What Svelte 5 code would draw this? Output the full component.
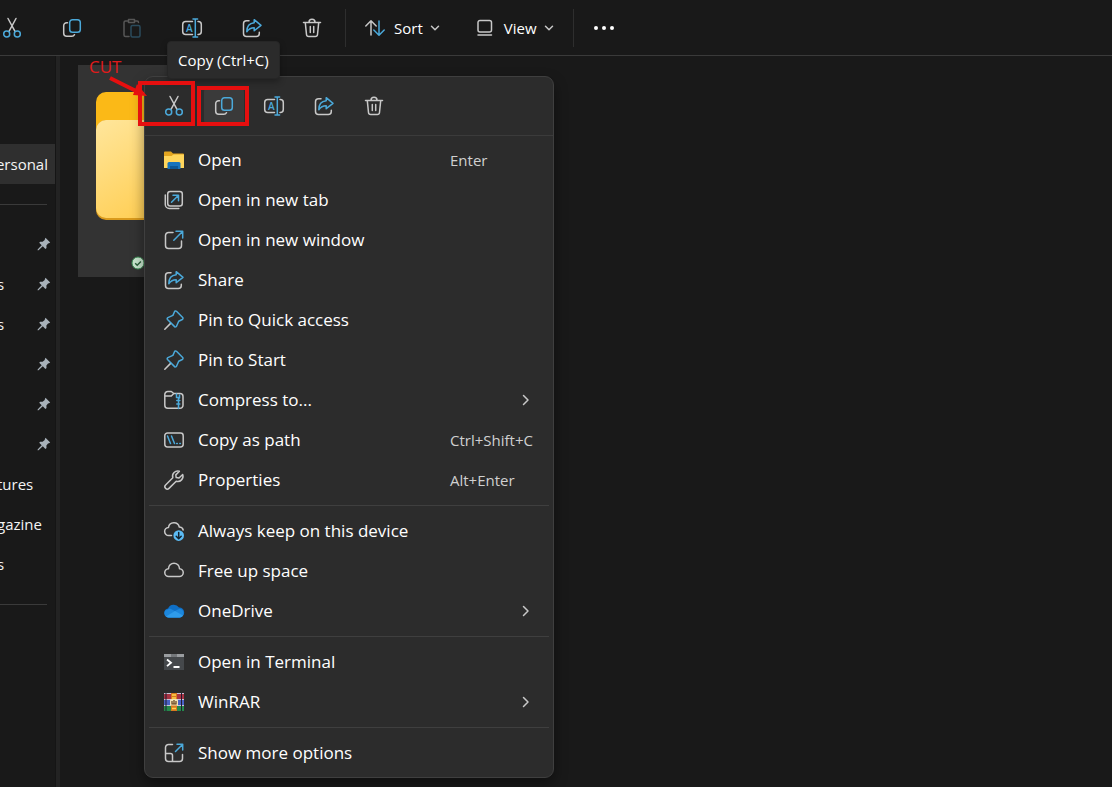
<script lang="ts">
  interface Stroke {
    d: string;
    tone?: 'accent' | 'solid';
  }

  interface MenuItem {
    label: string;
    icon: string;
    shortcut?: string;
    submenu?: boolean;
  }

  // Line icons on a 20×20 grid. Strokes without a tone use the light grey.
  const icons: Record<string, Stroke[]> = {
    cut: [
      { d: 'M6 .5 13 13.4M14 .5 7 13.4' },
      { d: 'M7.7 16a3 3 0 1 1-6 0 3 3 0 0 1 6 0ZM18.3 16a3 3 0 1 1-6 0 3 3 0 0 1 6 0Z', tone: 'accent' },
    ],
    copy: [
      { d: 'M5.5 4.7h-.8a3 3 0 0 0-3 3v7.6a3 3 0 0 0 3 3h5a3 3 0 0 0 2.8-1.6' },
      { d: 'M10.5 1.7h5a2.8 2.8 0 0 1 2.8 2.8v7a2.8 2.8 0 0 1-2.8 2.8h-5a2.8 2.8 0 0 1-2.8-2.8v-7a2.8 2.8 0 0 1 2.8-2.8Z', tone: 'accent' },
    ],
    paste: [
      { d: 'M6 3H3.5A1.5 1.5 0 0 0 2 4.5v12.5A1.5 1.5 0 0 0 3.5 18.5H7M13 3h2a1.5 1.5 0 0 1 1.5 1.5M6.5 1.5h6v3h-6Z' },
      { d: 'M10.5 7.5h6a1.5 1.5 0 0 1 1.5 1.5v8.5a1.5 1.5 0 0 1-1.5 1.5h-6A1.5 1.5 0 0 1 9 17.5V9a1.5 1.5 0 0 1 1.5-1.5Z', tone: 'accent' },
    ],
    rename: [
      { d: 'M10.5 3.5H3.7a3 3 0 0 0-3 3v7a3 3 0 0 0 3 3h6.8M16 3.5h.3a3 3 0 0 1 3 3v7a3 3 0 0 1-3 3H16' },
      { d: 'M13.3 1v18M11 1h4.6M11 19h4.6', tone: 'accent' },
    ],
    share: [
      { d: 'M7 2.7H4.5a3 3 0 0 0-3 3v9.8a3 3 0 0 0 3 3h9.8a3 3 0 0 0 3-3v-1.2' },
      { d: 'M12.2 1.7 19 7.3l-6.8 5.4V9.8c-3.2 0-5.4 1-7.4 3.9 0-5.5 2.9-8.6 7.4-9Z', tone: 'accent' },
    ],
    trash: [
      { d: 'M1.5 4.5h17M7 4.3a3 3 0 0 1 6 0M3.3 4.7l1.2 11.8a2.2 2.2 0 0 0 2.2 2h6.6a2.2 2.2 0 0 0 2.2-2l1.2-11.8M8.3 8.5v6M11.7 8.5v6' },
    ],
    sort: [
      { d: 'M6 17V3M.8 8 6 2.800l5.2 5.2' },
      { d: 'M14 3v14M8.8 12 14 17.200l5.2-5.2', tone: 'accent' },
    ],
    view: [{ d: 'M5 2.500h9.500a2 2 0 0 1 2 2v7.500a2 2 0 0 1-2 2H5a2 2 0 0 1-2-2V4.500a2 2 0 0 1 2-2ZM3 17h13.500' }],
    tab: [
      { d: 'M6.2 1.5h9.6a2.5 2.5 0 0 1 2.5 2.5v9.6a2.5 2.5 0 0 1-2.5 2.5H6.2a2.5 2.5 0 0 1-2.5-2.5V4a2.5 2.5 0 0 1 2.5-2.5ZM1.300 5v9.500a4 4 0 0 0 4 4h9.500' },
      { d: 'M7.5 12.3l6.8-6.8M9 5.3h5.5v5.5', tone: 'accent' },
    ],
    window: [
      { d: 'M9 2.5H4.5a3 3 0 0 0-3 3v10a3 3 0 0 0 3 3h10a3 3 0 0 0 3-3V11' },
      { d: 'M9.8 10.2 18.5 1.5M12 1.3h6.7V8', tone: 'accent' },
    ],
    pin: [
      { d: 'M.8 19.2l5.8-5.8' },
      { d: 'M12.5 1.3l6.2 6.2a1.3 1.3 0 0 1-.4 2l-3.6 1.7-2.2 5a1.2 1.2 0 0 1-1.9.4L3.5 9.5a1.2 1.2 0 0 1 .4-1.9l5-2.2L10.5 1.7a1.3 1.3 0 0 1 2-.4Z', tone: 'accent' },
    ],
    compress: [
      { d: 'M.8 6h6.5l2.5-2.5H16a3 3 0 0 1 3 3v8.8a3 3 0 0 1-3 3H3.8a3 3 0 0 1-3-3V4.5a3 3 0 0 1 3-3h3.5l2.500 2' },
      { d: 'M12.500 4v3.500h3M15.500 5v3M12.800 10.500h3M14.500 8v10.500M12.800 14h3', tone: 'accent' },
    ],
    path: [
      { d: 'M3.5 3h13A2.7 2.7 0 0 1 19.2 5.7v8.6A2.7 2.7 0 0 1 16.5 17h-13A2.7 2.7 0 0 1 .8 14.3V5.7A2.7 2.7 0 0 1 3.5 3Z' },
      { d: 'M3.5 6l3 7.500M7.500 6l3 7.500M12.700 13.500h.6M15.800 13.500h.6', tone: 'accent' },
    ],
    wrench: [
      { d: 'M18.7 4.5 15 8l-2.8-.4-.4-2.7 3.6-3.6a5.2 5.2 0 0 0-6.6 6.5L1.6 15a2.4 2.4 0 0 0 3.4 3.4l7.2-7.2a5.2 5.2 0 0 0 6.5-6.7Z' },
    ],
    keep: [
      { d: 'M7.5 14.5H4.8a4 4 0 0 1-.3-8A5.5 5.5 0 0 1 15.3 6a4 4 0 0 1 3.9 3' },
      { d: 'M20 14.6a5.300 5.300 0 1 1-10.6 0 5.3 5.3 0 0 1 10.6 0Z', tone: 'solid' },
    ],
    cloud: [{ d: 'M4.8 15.5a3.9 3.9 0 0 1-.3-7.8 5.5 5.5 0 0 1 11 0 3.9 3.9 0 0 1-.3 7.8Z' }],
    more: [
      { d: 'M8.5 1.5H4.5a3 3 0 0 0-3 3v11a3 3 0 0 0 3 3h11a3 3 0 0 0 3-3v-4M1.5 10.5h5a2 2 0 0 1 2 2v6' },
      { d: 'M11.5 8.5l7-7M13 1.3h5.7V7', tone: 'accent' },
    ],
  };

  const clipboardActions = [
    { icon: 'cut', label: 'Cut' },
    { icon: 'copy', label: 'Copy' },
    { icon: 'paste', label: 'Paste' },
    { icon: 'rename', label: 'Rename' },
    { icon: 'share', label: 'Share' },
    { icon: 'trash', label: 'Delete' },
  ];
  const quickActions = clipboardActions.filter((a) => a.icon !== 'paste');

  const groups: MenuItem[][] = [
    [
      { label: 'Open', icon: 'folder', shortcut: 'Enter' },
      { label: 'Open in new tab', icon: 'tab' },
      { label: 'Open in new window', icon: 'window' },
      { label: 'Share', icon: 'share' },
      { label: 'Pin to Quick access', icon: 'pin' },
      { label: 'Pin to Start', icon: 'pin' },
      { label: 'Compress to...', icon: 'compress', submenu: true },
      { label: 'Copy as path', icon: 'path', shortcut: 'Ctrl+Shift+C' },
      { label: 'Properties', icon: 'wrench', shortcut: 'Alt+Enter' },
    ],
    [
      { label: 'Always keep on this device', icon: 'keep' },
      { label: 'Free up space', icon: 'cloud' },
      { label: 'OneDrive', icon: 'onedrive', submenu: true },
    ],
    [
      { label: 'Open in Terminal', icon: 'terminal' },
      { label: 'WinRAR', icon: 'winrar', submenu: true },
    ],
    [{ label: 'Show more options', icon: 'more' }],
  ];

  // The pane is scrolled sideways, so only the tail of each name is in view.
  const pinned = ['', 's', 's', '', '', ''];
  const recent = ['tures', 'gazine', 's'];
</script>

{#snippet icon(name: string)}
  <svg class="icon" viewBox="0 0 20 20" aria-hidden="true">
    {#if name === 'folder'}
      <path d="M0 2.5a1 1 0 0 1 1-1h6l2 2h10a1 1 0 0 1 1 1V18H0Z" fill="#e3a51f" />
      <path d="M0 6h7.5l2-1.5H20V18H0Z" fill="#ffd65c" />
      <path d="M3.5 19v-5.5A1.5 1.5 0 0 1 5 12h10a1.5 1.5 0 0 1 1.5 1.5V19Z" fill="#1673bd" />
      <path d="M6 16h8v3H6Z" fill="#0c5796" />
    {:else if name === 'onedrive'}
      <path d="M4.5 16.5A4.5 4.5 0 0 1 4 7.6a6.3 6.3 0 0 1 11-1 4.9 4.9 0 0 1 .5 9.9Z" fill="#0f6fc6" />
      <path d="M4.5 16.5a4.5 4.5 0 0 1-3.6-6.7l5-2.3 5 2.5 4.6-2.2a4.4 4.4 0 0 1 .5 8.7Z" fill="#1d87dc" />
      <path d="M2 15.5 11 10l8 4.5a4.4 4.4 0 0 1-3.5 2h-11a4.4 4.4 0 0 1-2.5-1Z" fill="#2f9ceb" />
    {:else if name === 'terminal'}
      <path d="M0 2h20v16H0Z" fill="#45484b" />
      <path d="M0 2h20v3H0Z" fill="#9a9da0" />
      <path d="M7 2h6v3H7Z" fill="#75787b" />
      <path d="M3 7.5l4 3.3-4 3.3M9.5 15h6" fill="none" stroke="#fff" stroke-width="1.8" />
    {:else if name === 'winrar'}
      <path d="M0 1h20v6H0Z" fill="#a93343" />
      <path d="M0 7h20v6H0Z" fill="#4a62c4" />
      <path d="M0 13h20v6H0Z" fill="#25894a" />
      <path d="M0 1.5h20M0 7.5h20M0 13.5h20" stroke="#c8c4d8" stroke-width="1" />
      <path d="M2 1v18M17.5 1v18" stroke="#201c30" stroke-width="1" />
      <path d="M7 1h6v18H7Z" fill="#d9781f" />
      <path d="M8 3h4M8 6h4M8 16.5h4" stroke="#ffd54d" stroke-width="1.4" />
      <path d="M6 8.5A1.5 1.5 0 0 1 7.5 7h5A1.5 1.5 0 0 1 14 8.5v5H6Z" fill="#f3e3b5" />
      <path d="M8 9v3h4V9M10 8v4" fill="none" stroke="#5f3b18" stroke-width="1.2" />
    {:else}
      {#each icons[name] as stroke (stroke.d)}
        <path class={stroke.tone ?? 'line'} d={stroke.d} />
      {/each}
      {#if name === 'rename'}
        <text class="glyph" x="7.2" y="13.7">A</text>
      {:else if name === 'keep'}
        <path class="arrow" d="M14.7 11.5v6M12.2 15.2l2.5 2.5 2.5-2.5" />
      {/if}
    {/if}
  </svg>
{/snippet}

{#snippet chevron()}
  <svg class="chevron" viewBox="0 0 10 10" aria-hidden="true"><path class="line" d="M1.5 3.3 5 6.8l3.5-3.5" /></svg>
{/snippet}

<div class="explorer">
  <header class="toolbar">
    {#each clipboardActions as action (action.icon)}
      <button class="tool" class:dimmed={action.icon === 'paste'} aria-label={action.label}>
        {@render icon(action.icon)}
      </button>
    {/each}
    <span class="rule"></span>
    <button class="drop">{@render icon('sort')}Sort{@render chevron()}</button>
    <button class="drop">{@render icon('view')}View{@render chevron()}</button>
    <span class="rule"></span>
    <button class="tool" aria-label="See more">
      <svg class="icon" viewBox="0 0 20 20" aria-hidden="true">
        <circle cx="2" cy="10" r="2" /><circle cx="10" cy="10" r="2" /><circle cx="18" cy="10" r="2" />
      </svg>
    </button>
  </header>

  <div class="body">
    <nav class="sidebar">
      <a class="row current" href="#personal">Personal</a>
      <hr />
      {#each pinned as name, i (i)}
        <div class="row">
          <span>{name}</span>
          <svg class="tack" viewBox="0 0 14 14" aria-hidden="true">
            <path d="M8.5.8 13.2 5.4 12 6.3l-1 .2-1.6 2 .1 2.4-1.1 1L5.800 9.300 1.500 13.300.5 13.200l.3-1L4.700 8.200 2.200 5.800l1-1.100 2.400.1L7.700 3l.2-1Z" />
          </svg>
        </div>
      {/each}
      {#each recent as name (name)}
        <div class="row"><span>{name}</span></div>
      {/each}
      <hr />
    </nav>

    <main class="files">
      <div class="tile">
        <svg class="folder" viewBox="0 0 160 128" aria-hidden="true">
          <defs>
            <linearGradient id="front" x1="0" y1="0" x2="1" y2="1">
              <stop offset="0" stop-color="#ffe69c" />
              <stop offset="1" stop-color="#ffc22e" />
            </linearGradient>
          </defs>
          <path d="M0 10A10 10 0 0 1 10 0h42l16 14h82a10 10 0 0 1 10 10v94H0Z" fill="#fbb917" />
          <path d="M0 38a10 10 0 0 1 10-10h140a10 10 0 0 1 10 10v80a10 10 0 0 1-10 10H10a10 10 0 0 1-10-10Z" fill="#d99a1c" />
          <path d="M0 38a10 10 0 0 1 10-10h140a10 10 0 0 1 10 10v78a10 10 0 0 1-10 10H10a10 10 0 0 1-10-10Z" fill="url(#front)" />
        </svg>
        <svg class="synced" viewBox="0 0 14 14" aria-hidden="true">
          <circle cx="7" cy="7" r="6" />
          <path d="M4.2 7.2l2 2 3.7-3.8" />
        </svg>
      </div>
    </main>
  </div>

  <div class="menu" role="menu">
    <div class="quick">
      {#each quickActions as action (action.icon)}
        <button class:hovered={action.icon === 'copy'} aria-label={action.label}>
          {@render icon(action.icon)}
        </button>
      {/each}
    </div>
    {#each groups as group, i (i)}
      <div class="group">
        {#each group as item (item.label)}
          <button class="item" role="menuitem">
            {@render icon(item.icon)}
            <span class="label">{item.label}</span>
            {#if item.shortcut}
              <span class="shortcut">{item.shortcut}</span>
            {:else if item.submenu}
              <svg class="submenu" viewBox="0 0 12 12" aria-hidden="true"><path class="line" d="M3.5 1.500 8 6l-4.500 4.500" /></svg>
            {/if}
          </button>
        {/each}
      </div>
    {/each}
  </div>

  <div class="tooltip" role="tooltip">Copy (Ctrl+C)</div>

  <span class="note">CUT</span>
  <svg class="marks" viewBox="0 0 140 60" aria-hidden="true">
    <rect x="32" y="9" width="53" height="41" />
    <rect x="91" y="14" width="48" height="36" />
    <path d="M2 4 32 19" />
    <path class="head" d="M25 21 29 10 39 22Z" />
  </svg>
</div>

<style>
  :global(body) {
    background: #191919;
  }

  .explorer {
    position: relative;
    display: flex;
    flex-direction: column;
    min-height: 100vh;
    overflow: hidden;
    color: #fff;
    font: 15px/20px 'Open Sans', 'Noto Sans', sans-serif;
  }

  button {
    display: flex;
    align-items: center;
    padding: 0;
    border: 0;
    background: none;
    color: inherit;
    font: inherit;
  }

  .icon {
    flex: none;
    width: 20px;
    height: 20px;
    overflow: visible;
    fill: #fff;
  }

  .line,
  .accent,
  .arrow {
    fill: none;
    stroke: #c8c8c8;
    stroke-width: 1.5;
    stroke-linecap: round;
    stroke-linejoin: round;
  }

  .accent {
    stroke: #4ba9da;
  }

  .solid {
    fill: #5cbcf5;
  }

  .arrow {
    stroke: #14232e;
  }

  .glyph {
    fill: #4ba9da;
    font-size: 10px;
    font-weight: 600;
    text-anchor: middle;
  }

  .toolbar {
    display: flex;
    align-items: center;
    height: 55px;
    margin-left: -18px;
    border-bottom: 1px solid #3a3a3a;
  }

  .tool {
    justify-content: center;
    width: 60px;
    height: 40px;
  }

  .dimmed {
    opacity: 0.35;
  }

  .rule {
    width: 1px;
    height: 38px;
    margin-left: 3px;
    background: #2e2e2e;
  }

  .drop {
    height: 40px;
    gap: 9px;
    padding: 0 16px 0 19px;
  }

  .chevron {
    width: 10px;
    height: 10px;
    margin-left: -2px;
  }

  .body {
    display: flex;
    flex: 1;
  }

  .sidebar {
    width: 55px;
    padding-top: 88px;
    overflow: hidden;
    border-right: 1px solid #151515;
  }

  .row {
    display: flex;
    align-items: center;
    justify-content: space-between;
    height: 40px;
    padding-right: 4px;
    color: #f4f4f4;
    text-decoration: none;
  }

  .row span {
    margin-left: -3px;
  }

  .current {
    justify-content: flex-end;
    padding-right: 7px;
    background: #2f2f2f;
  }

  .sidebar hr {
    height: 1px;
    margin: 20px 8px 19px 0;
    border: 0;
    background: #3a3a3a;
  }

  .tack {
    width: 14px;
    height: 14px;
    fill: #a9b2ba;
  }

  .files {
    flex: 1;
    padding: 9px 18px;
    border-left: 4px solid #232323;
  }

  .tile {
    display: flex;
    flex-direction: column;
    gap: 36px;
    width: 200px;
    height: 212px;
    padding: 27px 18px 0;
    box-sizing: border-box;
    background: #333;
  }

  .folder {
    width: 160px;
    height: 128px;
  }

  .synced {
    width: 14px;
    height: 14px;
    margin-left: 35px;
    fill: #c9e6cf;
    stroke: #3f8f57;
  }

  .synced path {
    fill: none;
    stroke: #2b5f3b;
    stroke-width: 1.4;
  }

  .menu {
    position: absolute;
    top: 76px;
    left: 144px;
    width: 408px;
    padding-bottom: 4px;
    border: 1px solid #3f3f3f;
    border-radius: 9px;
    background: #2c2c2c;
    box-shadow: 0 6px 14px rgb(0 0 0 / 40%);
  }

  .quick {
    display: flex;
    align-items: center;
    gap: 10px;
    height: 58px;
    margin-bottom: 4px;
    padding-left: 9px;
    border-bottom: 1px solid #3b3b3b;
  }

  .quick button {
    justify-content: center;
    width: 40px;
    height: 36px;
    border-radius: 4px;
  }

  .quick .hovered {
    background: #3a3a3a;
  }

  .group + .group {
    margin: 5px 4px 0;
    padding-top: 5px;
    border-top: 1px solid #3f3f3f;
  }

  .group + .group .item {
    padding-left: 15px;
    padding-right: 0;
  }

  .item {
    width: 100%;
    height: 40px;
    gap: 14px;
    padding: 0 4px 0 19px;
    font-size: 17px;
    line-height: 24px;
  }

  .label {
    flex: 1;
    text-align: left;
  }

  .shortcut {
    width: 99px;
    color: #d0d0d0;
    font-size: 15px;
    text-align: left;
  }

  .submenu {
    width: 12px;
    height: 12px;
    margin-right: 17px;
  }

  .tooltip {
    position: absolute;
    top: 41px;
    left: 167px;
    padding: 8px 10px;
    border: 1px solid #262626;
    border-radius: 4px;
    background: #2b2b2b;
    box-shadow: 0 3px 6px rgb(0 0 0 / 30%);
  }

  .note {
    position: absolute;
    top: 57px;
    left: 89px;
    color: #e01b1b;
    font-size: 17px;
  }

  .marks {
    position: absolute;
    top: 74px;
    left: 108px;
    width: 140px;
    height: 60px;
    overflow: visible;
    fill: none;
    stroke: #e60f0f;
    stroke-width: 4;
    pointer-events: none;
  }

  .marks .head {
    fill: #e60f0f;
    stroke: none;
  }
</style>
